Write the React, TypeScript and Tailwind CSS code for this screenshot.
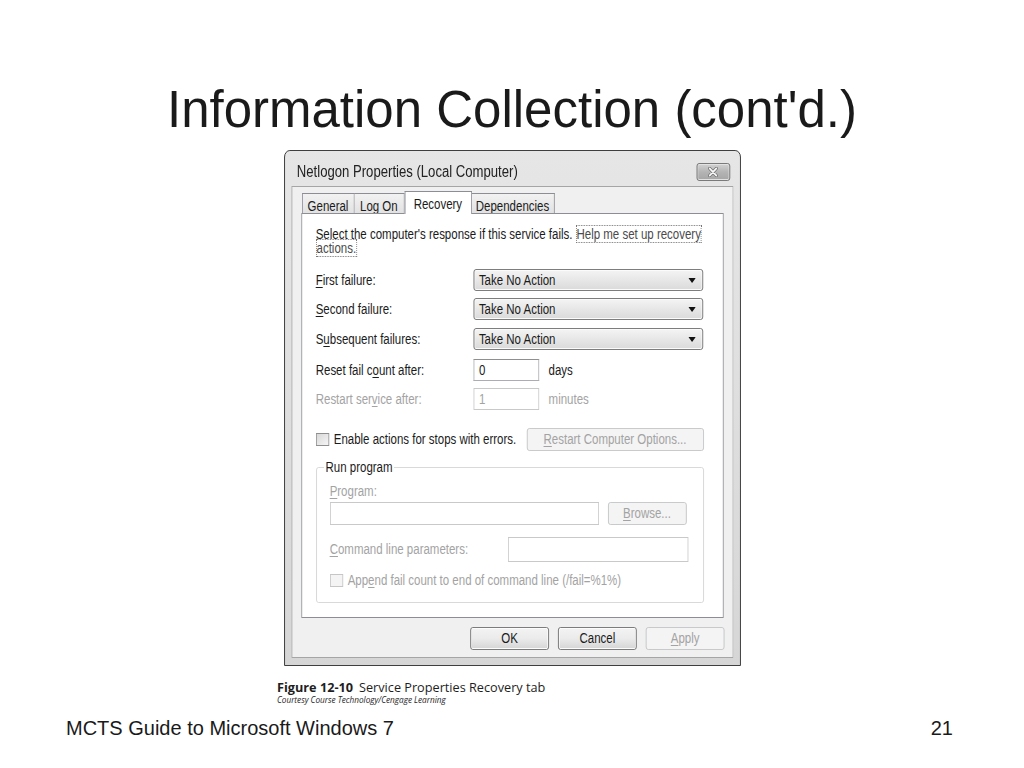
import React from 'react';

// The reference dialog is a horizontally squeezed screenshot (about 82%),
// so it is laid out at full width and squeezed as a whole.
const sans = "font-['Liberation_Sans',Arial,sans-serif]";

function U({ children }: { children: React.ReactNode }) {
  return <span className="underline underline-offset-[2px] decoration-1">{children}</span>;
}

function Combo() {
  return (
    <div className="w-[280px] h-[22px] rounded-[3px] border border-[#707070] bg-gradient-to-b from-[#f4f4f4] to-[#dadada] shadow-[inset_0_0_0_1px_#fbfbfb] flex items-center pl-[6px] pr-[8px]">
      <span className="flex-1 leading-none">Take No Action</span>
      <svg width="9" height="5" viewBox="0 0 9 5">
        <path d="M0 0h9L4.5 5z" fill="#111" />
      </svg>
    </div>
  );
}

function TextBox({ value, disabled, className }: { value?: string; disabled?: boolean; className: string }) {
  return (
    <div
      className={`${className} bg-white border flex items-center px-[6px] ${
        disabled ? 'border-[#c9c9c9] text-[#a3a3a3]' : 'border-[#abadb3] border-t-[#8e8f8f]'
      }`}
    >
      {value}
    </div>
  );
}

function Btn({ children, disabled, className }: { children: React.ReactNode; disabled?: boolean; className: string }) {
  return (
    <div
      className={`${className} rounded-[3px] border flex items-center justify-center ${
        disabled
          ? 'border-[#c2c4c6] bg-[#f4f4f4] text-[#a3a3a3]'
          : 'border-[#707070] bg-gradient-to-b from-[#f3f3f3] via-[#ebebeb] to-[#d5d5d5] shadow-[inset_0_0_0_1px_#fcfcfc]'
      }`}
    >
      {children}
    </div>
  );
}

function CheckBox({ disabled }: { disabled?: boolean }) {
  return (
    <div
      className={`w-[16px] h-[13px] border shrink-0 ${
        disabled ? 'border-[#c6c6c6] bg-[#f4f4f4]' : 'border-[#8f8f8f] bg-gradient-to-br from-[#d8d8d8] to-[#f6f6f6]'
      }`}
    />
  );
}

function Tab({ label, w, active }: { label: string; w: string; active?: boolean }) {
  return (
    <div
      className={`${w} border border-b-0 border-[#8c8e94] flex justify-center pt-[2px] ${
        active
          ? 'h-[23px] -mb-[1px] bg-white relative z-10'
          : 'h-[20px] bg-gradient-to-b from-[#f2f2f2] to-[#e2e2e2]'
      }`}
    >
      {label}
    </div>
  );
}

function Dialog() {
  return (
    <div className={`${sans} mx-auto mt-[12px] w-[557px] h-[516px] scale-x-[0.82] border border-[#2b2b2b] rounded-t-[7px] bg-gradient-to-b from-[#e6e6e6] to-[#d6d6d6] flex flex-col pl-[7.5px] pr-[8.5px] pb-[7px] text-[14px] text-[#1b1b1b]`}>
      {/* Title bar */}
      <div className="h-[35px] flex items-start justify-between pl-[7px] pr-[4px]">
        <span className="mt-[13px] text-[16px] leading-[16px] text-[#222]">Netlogon Properties (Local Computer)</span>
        <div className="mt-[12px] w-[41px] h-[18px] rounded-[3px] border border-[#6e6e6e] bg-gradient-to-b from-[#d2d2d2] via-[#b4b4b4] to-[#a6a6a6] shadow-[inset_0_0_0_1px_#e2e2e2] flex items-center justify-center">
          <svg width="14" height="10" viewBox="0 0 14 10">
            <path d="M3 1.5l8 7M11 1.5l-8 7" stroke="#6a6a6a" strokeWidth="3.6" strokeLinecap="round" />
            <path d="M3 1.5l8 7M11 1.5l-8 7" stroke="#f7f7f7" strokeWidth="2" strokeLinecap="round" />
          </svg>
        </div>
      </div>

      {/* Client area */}
      <div className="flex-1 bg-[#f0f0f0] border border-[#a5a5a5] px-[11px] pt-[4px] flex flex-col">
        {/* Tabs */}
        <div className="h-[22px] flex items-end ml-[1px]">
          <Tab label="General" w="w-[64px]" />
          <Tab label="Log On" w="w-[61px] border-l-0" />
          <Tab label="Recovery" w="w-[82px]" active />
          <Tab label="Dependencies" w="w-[101px] border-l-0" />
        </div>

        {/* Tab panel */}
        <div className="h-[405px] bg-white border border-[#8c8e94] flex flex-col pl-[17px] pr-[23px] pt-[13px]">
          <p className="leading-[14px] whitespace-nowrap">
            Select the computer's response if this service fails.{' '}
            <span className="text-[#4a4a4a] border border-dotted border-[#777] box-decoration-clone">
              Help me set up recovery
              <br />
              actions.
            </span>
          </p>

          <div className="mt-[14px] flex items-center">
            <span className="w-[192px]"><U>F</U>irst failure:</span>
            <Combo />
          </div>
          <div className="mt-[7px] flex items-center">
            <span className="w-[192px]"><U>S</U>econd failure:</span>
            <Combo />
          </div>
          <div className="mt-[8px] flex items-center">
            <span className="w-[192px]">S<U>u</U>bsequent failures:</span>
            <Combo />
          </div>

          <div className="mt-[9px] flex items-center">
            <span className="w-[192px]">Reset fail c<U>o</U>unt after:</span>
            <TextBox value="0" className="w-[80px] h-[22px]" />
            <span className="ml-[12px]">days</span>
          </div>
          <div className="mt-[7px] flex items-center text-[#a3a3a3]">
            <span className="w-[192px]">Restart ser<U>v</U>ice after:</span>
            <TextBox value="1" disabled className="w-[80px] h-[22px]" />
            <span className="ml-[12px]">minutes</span>
          </div>

          <div className="mt-[18px] flex items-center">
            <CheckBox />
            <span className="ml-[6px] whitespace-nowrap">Enable actions for stops with errors.</span>
            <Btn disabled className="ml-auto w-[216px] h-[23px]">
              <span><U>R</U>estart Computer Options...</span>
            </Btn>
          </div>

          {/* Run program group */}
          <fieldset className="mt-[10px] border border-[#d5d5d5] rounded-[3px] pl-[9px] pr-[9px] pb-[11px]">
            <legend className="px-[2px] leading-[13px]">Run program</legend>
            <div className="pl-[7px] pr-[9px] flex flex-col">
              <span className="mt-[11px] leading-[13px] text-[#a3a3a3]"><U>P</U>rogram:</span>
              <div className="mt-[4px] flex items-center">
                <TextBox disabled className="w-[328px] h-[23px]" />
                <Btn disabled className="ml-[11px] w-[96px] h-[23px]">
                  <span><U>B</U>rowse...</span>
                </Btn>
              </div>
              <div className="mt-[12px] flex items-center justify-between">
                <span className="text-[#a3a3a3]"><U>C</U>ommand line parameters:</span>
                <TextBox disabled className="w-[220px] h-[25px]" />
              </div>
              <div className="mt-[8px] flex items-center text-[#a3a3a3]">
                <CheckBox disabled />
                <span className="ml-[6px] whitespace-nowrap">App<U>e</U>nd fail count to end of command line (/fail=%1%)</span>
              </div>
            </div>
          </fieldset>
        </div>

        {/* Buttons */}
        <div className="mt-[9px] flex justify-end gap-[11px] -mr-[1.5px]">
          <Btn className="w-[96px] h-[23px] border-[#5a5a5a]">OK</Btn>
          <Btn className="w-[96px] h-[23px]">Cancel</Btn>
          <Btn disabled className="w-[96px] h-[23px]">
            <span><U>A</U>pply</span>
          </Btn>
        </div>
      </div>
    </div>
  );
}

export default function App() {
  return (
    <div className="w-[1024px] h-[768px] bg-white flex flex-col overflow-hidden">
      <h1 className={`${sans} mt-[82px] h-[56px] leading-[56px] text-center text-[51px] text-[#1a1a1a]`}>
        Information Collection (cont'd.)
      </h1>

      <Dialog />

      <div className="ml-[277px] mt-[14px] flex flex-col font-['Open_Sans','Noto_Sans',sans-serif] text-[#1e1e1e]">
        <div className="text-[12.7px] leading-[14px]">
          <span className="font-bold">Figure 12-10</span>
          <span className="ml-[6px]">Service Properties Recovery tab</span>
        </div>
        <div className="text-[8.2px] leading-[12px] italic">Courtesy Course Technology/Cengage Learning</div>
      </div>

      <div className={`${sans} mt-[10px] flex justify-between pl-[66px] pr-[71px] text-[20px] leading-[24px] text-[#1a1a1a]`}>
        <span>MCTS Guide to Microsoft Windows 7</span>
        <span>21</span>
      </div>
    </div>
  );
}
